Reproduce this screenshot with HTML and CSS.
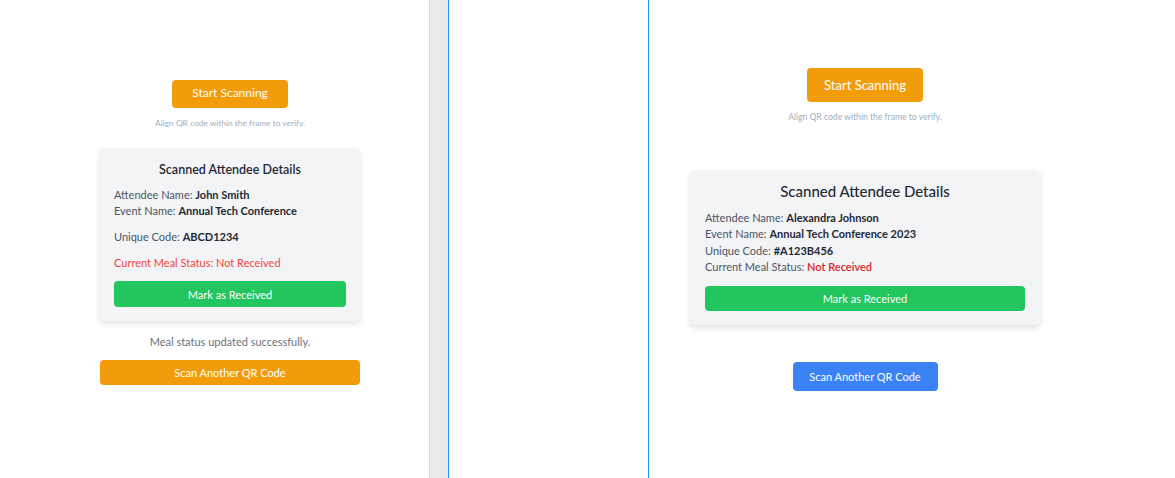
FILE: index.html
```html
<!DOCTYPE html>
<html lang="en">
<head>
    <meta charset="UTF-8">
    <meta name="viewport" content="width=device-width, initial-scale=1.0">
    <title>Meal Scanner</title>
    <link rel="stylesheet" href="styles.css">
</head>
<body>
    <div class="pane pane-left">
        <div class="scanner scanner-small">
            <button class="btn btn-start">Start Scanning</button>
            <p class="hint">Align QR code within the frame to verify.</p>

            <div class="card">
                <h2 class="card-title">Scanned Attendee Details</h2>
                <p class="row">Attendee Name: <strong>John Smith</strong></p>
                <p class="row">Event Name: <strong>Annual Tech Conference</strong></p>
                <p class="row row-gap">Unique Code: <strong>ABCD1234</strong></p>
                <p class="row row-gap status-red">Current Meal Status: Not Received</p>
                <button class="btn btn-green">Mark as Received</button>
            </div>

            <p class="message">Meal status updated successfully.</p>
            <button class="btn btn-again">Scan Another QR Code</button>
        </div>
    </div>

    <div class="divider"></div>
    <div class="pane pane-middle"></div>

    <div class="pane pane-right">
        <div class="scanner scanner-large">
            <button class="btn btn-start">Start Scanning</button>
            <p class="hint">Align QR code within the frame to verify.</p>

            <div class="card">
                <h2 class="card-title">Scanned Attendee Details</h2>
                <p class="row">Attendee Name: <strong>Alexandra Johnson</strong></p>
                <p class="row">Event Name: <strong>Annual Tech Conference 2023</strong></p>
                <p class="row">Unique Code: <strong>#A123B456</strong></p>
                <p class="row">Current Meal Status: <span class="not-received">Not Received</span></p>
                <button class="btn btn-green">Mark as Received</button>
            </div>

            <button class="btn btn-blue">Scan Another QR Code</button>
        </div>
    </div>
</body>
</html>
```

FILE: styles.css
```css
body {
    margin: 0;
    height: 100vh;
    display: flex;
    background-color: #fff;
    font-family: Lato, "Open Sans", sans-serif;
    color: #4b5563;
    overflow: hidden;
}
.pane {
    height: 100%;
}
.pane-left {
    width: 429px;
}
.divider {
    width: 18px;
    background-color: #ebebeb;
    border-left: 1px solid #dadada;
}
.pane-middle {
    width: 199px;
    border-left: 1px solid #1e90ff;
    border-right: 1px solid #1e90ff;
}
.pane-right {
    flex: 1;
}
.scanner {
    display: flex;
    flex-direction: column;
    align-items: center;
}
.scanner p {
    margin: 0;
}
.btn {
    border: none;
    border-radius: 4px;
    color: #fff;
    font-family: inherit;
    cursor: pointer;
    padding: 0;
}
.btn-start {
    background-color: #f39c0b;
}
.btn-green {
    background-color: #22c55e;
    width: 100%;
}
.hint {
    line-height: 12px;
    color: #a0aec0;
    margin-top: 9px !important;
}
.card {
    align-self: stretch;
    background-color: #f3f4f6;
    border-radius: 5px;
    box-shadow: 0 3px 6px rgba(0, 0, 0, 0.12);
}
.card-title {
    margin: 0;
    text-align: center;
    font-weight: 600;
    color: #1f2937;
}
.row strong {
    font-weight: 700;
    color: #1f2937;
}

/* left variant */
.scanner-small {
    margin-left: 100px;
    width: 260px;
    padding-top: 80px;
}
.scanner-small .btn-start {
    width: 116px;
    height: 28px;
    padding-bottom: 3px;
    font-size: 12px;
}
.scanner-small .hint {
    font-size: 8.4px;
}
.scanner-small .card {
    margin-top: 19px;
    padding: 13px 14px 14px;
}
.scanner-small .card-title {
    font-size: 12.5px;
    line-height: 18px;
    margin-bottom: 8px;
}
.scanner-small .row {
    font-size: 11px;
    line-height: 16px;
}
.scanner-small .row-gap {
    margin-top: 10px;
}
.status-red {
    color: #ef4444;
}
.scanner-small .btn-green {
    height: 26px;
    margin-top: 10px;
    font-size: 11px;
}
.message {
    font-size: 11px;
    line-height: 16px;
    color: #6b7280;
    margin-top: 13px !important;
}
.btn-again {
    background-color: #f39c0b;
    width: 100%;
    height: 25px;
    margin-top: 10px;
    font-size: 11px;
}

/* right variant */
.scanner-large {
    margin-left: 41px;
    width: 350px;
    padding-top: 68px;
}
.scanner-large .btn-start {
    width: 116px;
    height: 34px;
    font-size: 13px;
}
.scanner-large .hint {
    font-size: 8.6px;
}
.scanner-large .card {
    margin-top: 47px;
    padding: 11px 15px 14px;
}
.scanner-large .card-title {
    font-size: 15px;
    line-height: 20px;
    font-weight: 500;
    margin-bottom: 9px;
}
.scanner-large .row {
    font-size: 11px;
    line-height: 16.3px;
}
.not-received {
    color: #dc2626;
    font-weight: 600;
}
.scanner-large .btn-green {
    height: 25px;
    margin-top: 11px;
    font-size: 11px;
}
.btn-blue {
    background-color: #3b82f6;
    width: 145px;
    height: 29px;
    margin-top: 37px;
    font-size: 11px;
}
```
